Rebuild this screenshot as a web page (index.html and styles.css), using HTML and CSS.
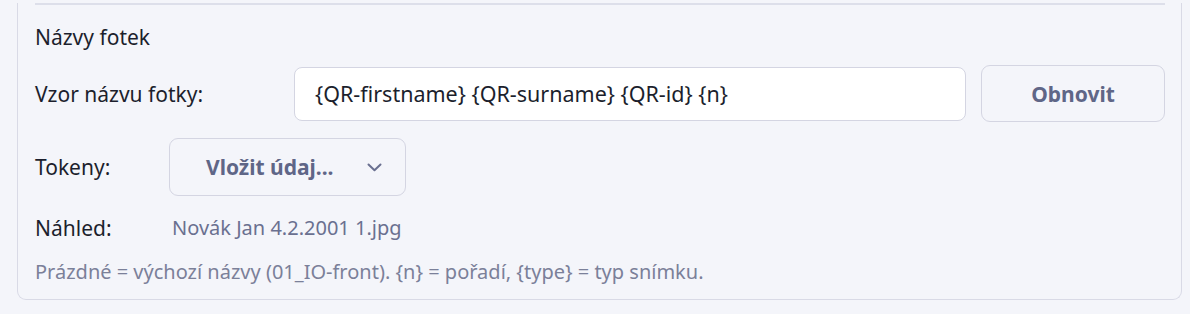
FILE: index.html
```html
<!DOCTYPE html>
<html lang="cs">
<head>
    <meta charset="UTF-8">
    <meta name="viewport" content="width=device-width, initial-scale=1.0">
    <title>Názvy fotek</title>
    <link rel="stylesheet" href="styles.css">
</head>
<body>
    <div class="card">
        <div class="divider"></div>

        <h3>Názvy fotek</h3>

        <div class="row pattern-row">
            <label for="pattern">Vzor názvu fotky:</label>
            <input type="text" id="pattern" value="{QR-firstname} {QR-surname} {QR-id} {n}">
            <button type="button" class="btn">Obnovit</button>
        </div>

        <div class="row tokens-row">
            <span class="label">Tokeny:</span>
            <button type="button" class="btn select">
                <span>Vložit údaj...</span>
                <svg width="15" height="9" viewBox="0 0 15 9"><path d="M1.5 1.5 L7.5 7.3 L13.5 1.5" fill="none" stroke="currentColor" stroke-width="2" stroke-linecap="round" stroke-linejoin="round"/></svg>
            </button>
        </div>

        <div class="row preview-row">
            <span class="label">Náhled:</span>
            <span class="preview">Novák Jan 4.2.2001 1.jpg</span>
        </div>

        <p class="hint">Prázdné = výchozí názvy (01_IO-front). {n} = pořadí, {type} = typ snímku.</p>
    </div>
</body>
</html>
```

FILE: styles.css
```css
* { box-sizing: border-box; margin: 0; padding: 0; font-family: "Noto Sans", "Open Sans", sans-serif; }
html, body { height: 314px; overflow: hidden; }
body { background: #f4f5fa; color: #1c1f2d; padding-top: 1px; }

/* Card (its top lies above the frame) */
.card {
    margin: -21px 8px 0 17px;
    padding: 0 16px 14px 17px;
    background: #f4f5fa;
    border: 1.5px solid #d9dae6;
    border-top: none;
    border-radius: 0 0 9px 9px;
}
.divider { margin-top: 23px; height: 2px; background: #dddfea; }

h3 { font-size: 21px; font-weight: 400; margin-top: 18px; line-height: 28px; }

.row { display: flex; align-items: center; }
.row label, .row .label { font-size: 21px; line-height: 28px; }

/* Pattern input */
.pattern-row { margin-top: 14px; }
.pattern-row label { width: 259px; flex-shrink: 0; }
input {
    flex: 1;
    min-width: 0;
    height: 54px;
    padding: 0 20px;
    font-size: 21.5px;
    color: #1c1f2d;
    background: #fff;
    border: 1.5px solid #d4d5e2;
    border-radius: 8px;
    outline: none;
}

/* Buttons */
.btn {
    height: 57px;
    background: #f4f5fa;
    border: 1.5px solid #d4d5e2;
    border-radius: 9px;
    color: #5f6687;
    font-size: 21px;
    font-weight: 700;
}
.pattern-row .btn { width: 184px; margin-left: 15px; flex-shrink: 0; }

/* Token select */
.tokens-row { margin-top: 16px; }
.tokens-row .label { width: 134px; }
.select { width: 237px; height: 58px; display: flex; align-items: center; padding-left: 36px; gap: 33px; }
.select svg { color: #6a7090; }

/* Preview */
.preview-row { margin-top: 18px; }
.preview-row .label { width: 137px; }
.preview { font-size: 20px; line-height: 28px; color: #6a7090; }

.hint { margin-top: 17px; font-size: 20px; line-height: 26px; color: #7b8099; }
```
